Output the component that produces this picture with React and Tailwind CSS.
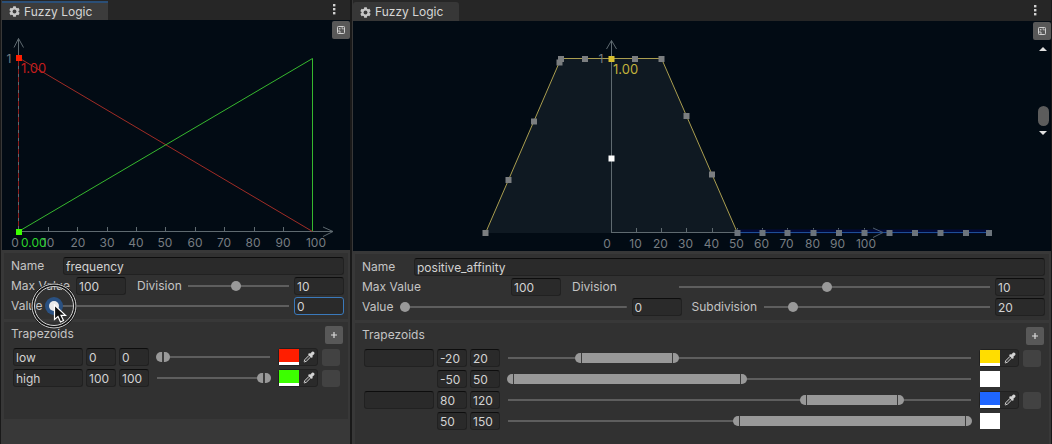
import { useState } from "react";

const INPUT =
  "h-[18px] w-full min-w-0 rounded-[3px] border border-[#212121] border-t-[#0d0d0d] bg-[#2a2a2a] px-0.5 text-[#d2d2d2] outline-none focus:border-[#3a79bb]";

const RANGE =
  "block h-[10px] w-full min-w-0 appearance-none bg-transparent bg-[linear-gradient(#5e5e5e,#5e5e5e)] bg-[length:100%_2px] bg-center bg-no-repeat outline-none [&::-webkit-slider-thumb]:size-[10px] [&::-webkit-slider-thumb]:appearance-none [&::-webkit-slider-thumb]:rounded-full";
const THUMB = "[&::-webkit-slider-thumb]:bg-[#999999]";
const THUMB_ACTIVE =
  "[&::-webkit-slider-thumb]:bg-[#eaeaea] [&::-webkit-slider-thumb]:shadow-[0_0_0_4px_#2a5182]";

const CAP =
  "pointer-events-none absolute top-0 h-[10px] appearance-none bg-transparent outline-none [&::-webkit-slider-thumb]:pointer-events-auto [&::-webkit-slider-thumb]:h-[10px] [&::-webkit-slider-thumb]:w-[7px] [&::-webkit-slider-thumb]:appearance-none [&::-webkit-slider-thumb]:border-[#3c3c3c] [&::-webkit-slider-thumb]:bg-[#999999]";

function GearIcon() {
  return (
    <svg viewBox="0 0 12 12" className="size-[11px] shrink-0">
      <g fill="#c8c8c8">
        {[0, 60, 120].map((a) => (
          <rect key={a} x="4.4" y="0.3" width="3.2" height="11.4" rx="0.6" transform={`rotate(${a} 6 6)`} />
        ))}
        <circle cx="6" cy="6" r="4.3" />
      </g>
      <circle cx="6" cy="6" r="2.1" fill="#3c3c3c" />
    </svg>
  );
}

function DropperIcon() {
  return (
    <svg viewBox="0 0 12 12" className="size-3">
      <path d="M6.2 4.2 7.8 5.8 3.4 10.2 1.5 10.9 1.1 10.5 1.8 8.6z" fill="#3a3a3a" stroke="#d0d0d0" strokeWidth="1" />
      <path d="M5 3.200 6.2 2.1 7 2.8 9 .7Q10 .1 11 .9 11.900 2 11.3 3L9.200 5 9.900 5.8 8.8 7z" fill="#d4d4d4" />
    </svg>
  );
}

function TabBar({ active }) {
  return (
    <header className={`flex items-end justify-between bg-[#262626] ${active ? "h-5 pt-px" : "h-[21px] pt-0.5"}`}>
      <button
        type="button"
        className={`flex h-full w-[106px] items-center gap-1 pl-[7px] text-[#d6d6d6] ${
          active ? "border-t-2 border-[#2b4f77] bg-[#3c3c3c]" : "rounded-t-[3px] bg-[#373737] pt-px"
        }`}
      >
        <GearIcon />
        Fuzzy Logic
      </button>
      <button type="button" aria-label="Window menu" className="flex h-full w-8 items-center justify-center">
        <svg viewBox="0 0 4 12" className="-mt-1 h-3 w-1" fill="#d0d0d0">
          <rect x="1" y="1" width="2.4" height="2.4" />
          <rect x="1" y="5" width="2.4" height="2.4" />
          <rect x="1" y="9" width="2.4" height="2.4" />
        </svg>
      </button>
    </header>
  );
}

function ExpandButton() {
  return (
    <button
      type="button"
      aria-label="Fit view"
      className="absolute right-0 top-px flex size-[18px] items-center justify-center rounded-[2px] bg-[#585858]"
    >
      <svg viewBox="0 0 8 8" className="size-2">
        <rect x="0.5" y="0.5" width="7" height="7" rx="0.8" fill="none" stroke="#d0d0d0" />
        <path d="M2 4v2h2M4.5 2H6v1.5" fill="none" stroke="#c0c0c0" />
        <rect x="2" y="2" width="1.4" height="1.4" fill="#c0c0c0" />
      </svg>
    </button>
  );
}

const AXIS_TEXT = { fill: "#777d82", fontSize: 12, textAnchor: "middle" };

function Marker({ x, y, fill = "#7b7e80" }) {
  return <rect x={x - 3} y={y - 3} width="6" height="6" fill={fill} />;
}

function FrequencyPlot() {
  const ticks = [48, 77, 107, 136, 165, 195, 224, 254, 283];
  const labels = [48, 78, 107, 136, 165, 195, 224, 253, 283];
  return (
    <svg viewBox="2 20 348 230" className="block w-full bg-[#020b14]" role="img" aria-label="frequency plot">
      <g stroke="#5f6a70" fill="none">
        <path d="M18.5 231V38.5M14 47.5 18.5 38.5 23.5 47.5" />
        <path d="M18 231.5H333M323 227 333 231.5 323 236.5" />
        {ticks.map((x) => (
          <path key={x} d={`M${x + 0.5} 227V231`} />
        ))}
      </g>
      <path d="M18.5 61V231" stroke="#8a1c1c" strokeDasharray="5 3" />
      <path d="M19 58 312.5 231.5" stroke="#a02c26" />
      <path d="M18.5 231.5 312.5 58.5V231" fill="none" stroke="#36b82e" />
      <g {...AXIS_TEXT}>
        <text x="9" y="62.5">1</text>
        <text x="15" y="246.5">0</text>
        {labels.map((x, i) => (
          <text key={x} x={x} y="246.5">{(i + 1) * 10}</text>
        ))}
        <text x="316" y="246.5">100</text>
      </g>
      <Marker x={19} y={58} fill="#ff1e00" />
      <Marker x={19} y={232} fill="#3cff00" />
      <text x="21" y="73" fontSize="13" fill="#c41c1c">1.00</text>
      <text x="21" y="246.5" fontSize="12" fill="#2cd42c">0.00</text>
    </svg>
  );
}

function AffinityPlot() {
  const ticks = [636, 661, 686, 712, 737, 762, 787, 813, 838, 864];
  const sides = [
    [559.5, 62.5], [534, 121.5], [508.5, 180], [485.5, 233], [561, 59], [585, 59], [635, 59], [661.5, 59],
    [686.5, 116], [712, 174.5],
  ];
  const base = [737.5, 762.5, 787.5, 813.5, 839, 864.5, 889.5, 915, 940.5, 966, 989];
  return (
    <svg viewBox="353 21 698 230" className="block w-full bg-[#020b14]" role="img" aria-label="positive affinity plot">
      <path d="M485.5 233 561 59H661.5L737.5 233z" fill="#0f1922" />
      <g stroke="#5f6a70" fill="none">
        <path d="M611.5 232V40.5M606.5 49 611.5 40.5 616.5 49" />
        <path d="M611 232.5H737" />
        {ticks.map((x) => (
          <path key={x} d={`M${x + 0.5} 228V232`} />
        ))}
      </g>
      <path d="M737 231.5H989" stroke="#020a3a" strokeWidth="4" />
      <path d="M737 232.5H989" stroke="#1d4f96" />
      <path d="M873 228 883 232.5 873 237.5" stroke="#4f5f70" fill="none" />
      <path d="M485.5 233 561 58.5H661.5L737.5 233" fill="none" stroke="#aa9e50" />
      <g {...AXIS_TEXT}>
        <text x="601" y="63">1</text>
        <text x="607" y="247.5">0</text>
        {ticks.map((x, i) => (
          <text key={x} x={i === 9 ? 866 : x - 0.5} y="247.5">{(i + 1) * 10}</text>
        ))}
      </g>
      {sides.map(([x, y]) => (
        <Marker key={`${x}-${y}`} x={x} y={y} />
      ))}
      {base.map((x) => (
        <Marker key={x} x={x} y={233} fill="#6c747c" />
      ))}
      <Marker x={611.5} y={59} fill="#d8c030" />
      <Marker x={611.5} y={158.5} fill="#ffffff" />
      <text x="613" y="74" fontSize="13" fill="#c2b23c">1.00</text>
    </svg>
  );
}

function ViewScroller() {
  return (
    <div className="absolute right-0 top-5 flex w-4 flex-col items-center">
      <button type="button" aria-label="Zoom in" className="flex h-4 w-4 items-center justify-center">
        <svg viewBox="0 0 8 4" className="h-1 w-2" fill="#e0e0e0"><path d="M0 4 4 0 8 4z" /></svg>
      </button>
      <input
        type="range"
        aria-label="Vertical zoom"
        min="0"
        max="100"
        defaultValue="94"
        className="h-[72px] w-[11px] appearance-none bg-transparent outline-none [writing-mode:vertical-lr] [&::-webkit-slider-thumb]:h-5 [&::-webkit-slider-thumb]:w-[11px] [&::-webkit-slider-thumb]:appearance-none [&::-webkit-slider-thumb]:rounded-full [&::-webkit-slider-thumb]:bg-[#5c5c5c]"
      />
      <button type="button" aria-label="Zoom out" className="flex h-2 w-4 items-center justify-center">
        <svg viewBox="0 0 8 4" className="h-1 w-2" fill="#e0e0e0"><path d="M0 0 4 4 8 0z" /></svg>
      </button>
    </div>
  );
}

function MinMaxSlider({ name, low, high, min, max }) {
  const [a, setA] = useState(low);
  const [b, setB] = useState(high);
  const pa = (a - min) / (max - min);
  const pb = (b - min) / (max - min);
  return (
    <div className="relative h-[10px] flex-1">
      <div className="absolute inset-x-px top-1 h-0.5 bg-[#5e5e5e]" />
      <div
        className="absolute top-0 h-[10px] bg-[#999999]"
        style={{ left: `calc(7px + (100% - 14px) * ${pa})`, width: `calc((100% - 14px) * ${pb - pa})` }}
      />
      <div className="absolute inset-y-0 left-0 right-[7px]">
        <input
          type="range"
          aria-label={`${name} minimum`}
          min={min}
          max={max}
          value={a}
          onChange={(e) => setA(Math.min(+e.target.value, b))}
          className={`${CAP} left-0 w-full [&::-webkit-slider-thumb]:rounded-l-full [&::-webkit-slider-thumb]:border-r`}
        />
      </div>
      <div className="pointer-events-none absolute inset-y-0 left-[7px] right-0">
        <input
          type="range"
          aria-label={`${name} maximum`}
          min={min}
          max={max}
          value={b}
          onChange={(e) => setB(Math.max(+e.target.value, a))}
          className={`${CAP} left-0 w-full [&::-webkit-slider-thumb]:rounded-r-full [&::-webkit-slider-thumb]:border-l`}
        />
      </div>
    </div>
  );
}

function TrapezoidRow({ name, label, low, high, min, max, color }) {
  const colorInput =
    "block w-full appearance-none border-0 bg-transparent p-0 [&::-webkit-color-swatch-wrapper]:p-0 [&::-webkit-color-swatch]:rounded-none [&::-webkit-color-swatch]:border-0";
  return (
    <li className="flex h-[18px] items-center">
      <div className="w-[70px]">
        {name !== null && <input className={INPUT} aria-label={`${label} name`} defaultValue={name} />}
      </div>
      <div className="ml-[3px] w-[30px]">
        <input className={INPUT} aria-label={`${label} low`} defaultValue={low} />
      </div>
      <div className="ml-[3px] mr-[7px] w-[30px]">
        <input className={INPUT} aria-label={`${label} high`} defaultValue={high} />
      </div>
      <MinMaxSlider name={label} low={low} high={high} min={min} max={max} />
      {name !== null ? (
        <div className="ml-[7px] flex h-[18px] w-10 items-center rounded-[3px] border border-[#212121] bg-[#2a2a2a]">
          <div className="w-5">
            <input type="color" aria-label={`${label} colour`} defaultValue={color} className={`${colorInput} h-[13px]`} />
            <div className="h-[3px] bg-white" />
          </div>
          <button type="button" aria-label={`Pick ${label} colour`} className="flex flex-1 justify-center pl-px">
            <DropperIcon />
          </button>
        </div>
      ) : (
        <div className="ml-[7px] w-10 pl-px">
          <div className="w-5">
            <input type="color" aria-label={`${label} colour`} defaultValue={color} className={`${colorInput} h-4`} />
          </div>
        </div>
      )}
      <div className="ml-1 w-[18px]">
        {name !== null && (
          <button type="button" aria-label={`Remove ${label}`} className="block h-[17px] w-full rounded-[3px] bg-[#424242]" />
        )}
      </div>
    </li>
  );
}

function TrapezoidList({ rows, min, max }) {
  return (
    <section className="mx-0.5 mt-[3px] bg-[#313131] pb-8 pl-[9px] pr-2 pt-1">
      <div className="mr-[-3px] flex h-[18px] items-start justify-between">
        <h2 className="-ml-0.5">Trapezoids</h2>
        <button
          type="button"
          aria-label="Add trapezoid"
          className="flex size-[18px] items-center justify-center rounded-[2px] bg-[#585858]"
        >
          <svg viewBox="0 0 8 8" className="size-2" stroke="#dddddd" strokeWidth="1.2"><path d="M4 1v6M1 4h6" /></svg>
        </button>
      </div>
      <ul className="mt-1 flex flex-col gap-[3px]">
        {rows.map((row) => (
          <TrapezoidRow key={row.label} min={min} max={max} {...row} />
        ))}
      </ul>
    </section>
  );
}

function Pointer() {
  return (
    <svg viewBox="0 0 48 48" className="pointer-events-none absolute -left-[19px] -top-[19px] size-12">
      <circle cx="24" cy="24" r="21" fill="none" stroke="#111111" strokeWidth="4" />
      <circle cx="24" cy="24" r="22" fill="none" stroke="#d8d8d8" strokeWidth="1" />
      <circle cx="24" cy="24" r="19.5" fill="none" stroke="#d8d8d8" strokeWidth="1" />
      <path d="M24.5 23v14.5l3.500-3 2.500 5.500 3-1.500-2.500-5.200h4.500z" fill="#111111" stroke="#ffffff" strokeWidth="1.2" />
    </svg>
  );
}

export default function App() {
  return (
    <main className="grid min-h-screen grid-cols-[351fr_701fr] bg-[#191919] font-['Inter',sans-serif] text-[12px] leading-4 text-[#c4c4c4]">
      <div className="flex flex-col border-x border-[#191919] bg-[#383838] pl-px">
        <TabBar active />
        <div className="relative">
          <FrequencyPlot />
          <ExpandButton />
        </div>
        <section className="mx-0.5 mt-[3px] flex flex-col gap-0.5 bg-[#313131] pb-1 pl-[7px] pr-1 pt-1">
          <div className="flex items-center">
            <label htmlFor="f-name" className="w-[52px]">Name</label>
            <div className="flex-1"><input id="f-name" className={INPUT} defaultValue="frequency" /></div>
          </div>
          <div className="flex items-center">
            <label htmlFor="f-max" className="w-[65px]">Max Value</label>
            <div className="w-[50px]"><input id="f-max" className={INPUT} defaultValue="100" /></div>
            <label htmlFor="f-div" className="ml-[11px] w-[51px]">Division</label>
            <div className="flex-1">
              <input id="f-div" type="range" min="1" max="20" defaultValue="10" className={`${RANGE} ${THUMB}`} />
            </div>
            <div className="ml-[5px] w-[50px]"><input className={INPUT} aria-label="Division value" defaultValue="10" /></div>
          </div>
          <div className="flex items-center">
            <label htmlFor="f-val" className="w-[38px]">Value</label>
            <div className="relative flex-1">
              <input id="f-val" type="range" min="0" max="100" defaultValue="0" className={`${RANGE} ${THUMB_ACTIVE}`} />
              <Pointer />
            </div>
            <div className="ml-[5px] w-[50px]">
              <input className={INPUT} aria-label="Value amount" defaultValue="0" autoFocus />
            </div>
          </div>
        </section>
        <TrapezoidList
          min={0}
          max={100}
          rows={[
            { label: "low", name: "low", low: 0, high: 0, color: "#ff1e00" },
            { label: "high", name: "high", low: 100, high: 100, color: "#3cff00" },
          ]}
        />
      </div>

      <div className="flex flex-col border-x border-[#191919] bg-[#383838] pl-px">
        <TabBar />
        <div className="relative">
          <AffinityPlot />
          <ExpandButton />
          <ViewScroller />
        </div>
        <section className="mx-0.5 mt-[3px] flex flex-col gap-0.5 bg-[#313131] pb-1 pl-[7px] pr-1 pt-1">
          <div className="flex items-center">
            <label htmlFor="a-name" className="w-[52px]">Name</label>
            <div className="flex-1"><input id="a-name" className={INPUT} defaultValue="positive_affinity" /></div>
          </div>
          <div className="grid grid-cols-[149fr_50px_118fr_311fr_55px] items-center">
            <label htmlFor="a-max">Max Value</label>
            <input id="a-max" className={INPUT} defaultValue="100" />
            <label htmlFor="a-div" className="pl-[11px]">Division</label>
            <div>
              <input id="a-div" type="range" min="1" max="20" defaultValue="10" className={`${RANGE} ${THUMB}`} />
            </div>
            <div className="pl-[5px]"><input className={INPUT} aria-label="Division value" defaultValue="10" /></div>
          </div>
          <div className="flex items-center">
            <label htmlFor="a-val" className="w-[38px]">Value</label>
            <div className="flex-1">
              <input id="a-val" type="range" min="0" max="100" defaultValue="0" className={`${RANGE} ${THUMB}`} />
            </div>
            <div className="ml-[5px] w-[50px]"><input className={INPUT} aria-label="Value amount" defaultValue="0" /></div>
            <label htmlFor="a-sub" className="ml-[10px] w-[72px]">Subdivision</label>
            <div className="flex-1">
              <input id="a-sub" type="range" min="10" max="100" defaultValue="20" className={`${RANGE} ${THUMB}`} />
            </div>
            <div className="ml-[5px] w-[50px]"><input className={INPUT} aria-label="Subdivision value" defaultValue="20" /></div>
          </div>
        </section>
        <TrapezoidList
          min={-50}
          max={150}
          rows={[
            { label: "first top", name: "", low: -20, high: 20, color: "#ffdd00" },
            { label: "first base", name: null, low: -50, high: 50, color: "#ffffff" },
            { label: "second top", name: "", low: 80, high: 120, color: "#1f66ff" },
            { label: "second base", name: null, low: 50, high: 150, color: "#ffffff" },
          ]}
        />
      </div>
    </main>
  );
}
